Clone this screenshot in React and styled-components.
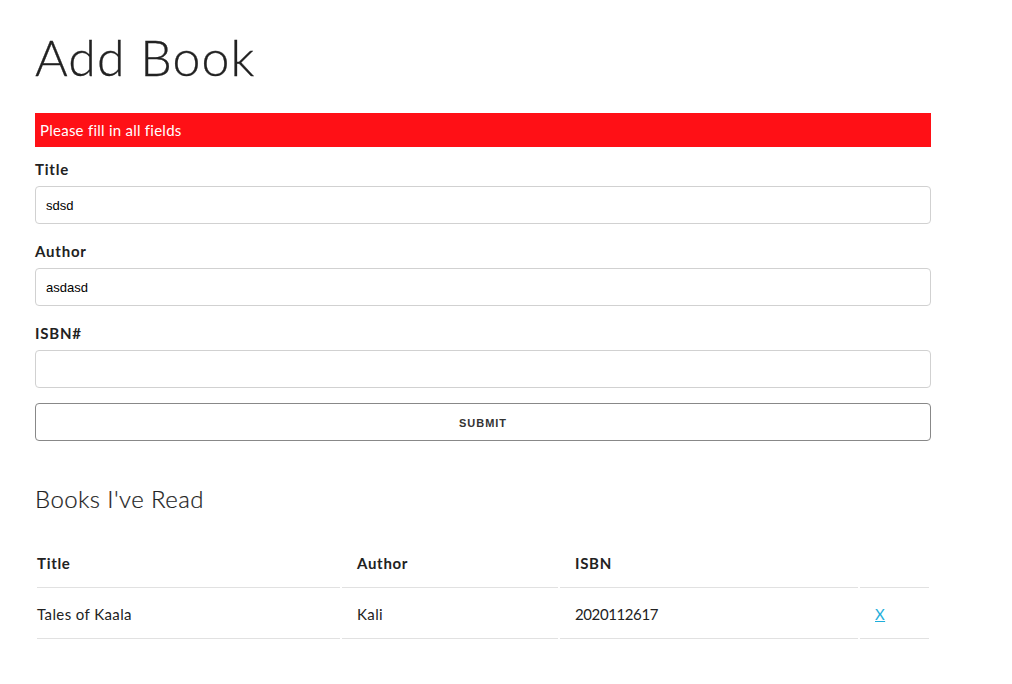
import React from "react";
import styled, { createGlobalStyle } from "styled-components";

const Global = createGlobalStyle`
  *, *::before, *::after { box-sizing: border-box; }
  html, body { margin: 0; padding: 0; background: #fff; }
  body {
    font-family: Lato, "Open Sans", sans-serif;
    font-size: 15px;
    line-height: 1.6;
    color: #222;
    letter-spacing: 0.35px;
  }
`;

const Page = styled.div`
  width: 896px;
  margin-left: 35px;
  padding-top: 27px;
`;

const H1 = styled.h1`
  margin: 0 0 26px;
  font-size: 50px;
  line-height: 1.2;
  font-weight: 300;
  letter-spacing: 1.1px;
  -webkit-text-stroke: 0.3px #222;
`;

const Alert = styled.div`
  background: #ff1016;
  color: #fff;
  padding: 5px;
  line-height: 24px;
  margin-bottom: 10px;
  letter-spacing: 0.25px;
`;

const Form = styled.form`
  display: flex;
  flex-direction: column;
`;

const Label = styled.label`
  display: block;
  font-weight: 700;
  line-height: 24px;
  margin-bottom: 5px;
  letter-spacing: 0.8px;
`;

const Input = styled.input`
  display: block;
  width: 100%;
  height: 38px;
  padding: 6px 10px;
  border: 1px solid #d1d1d1;
  border-radius: 4px;
  margin: 0 0 15px;
  font-family: "Liberation Sans", Arial, sans-serif;
  font-size: 13px;
  color: #000;
  background: #fff;
  outline: none;
`;

const Button = styled.button`
  display: block;
  width: 100%;
  height: 38px;
  padding: 0 30px;
  border: 1px solid #888;
  border-radius: 4px;
  background: transparent;
  color: #333;
  font-family: "Liberation Sans", Arial, sans-serif;
  font-size: 11px;
  font-weight: 700;
  letter-spacing: 1px;
  text-transform: uppercase;
  line-height: 38px;
  cursor: pointer;
`;

const H5 = styled.h5`
  margin: 40px 0 20px;
  font-size: 24px;
  line-height: 1.5;
  font-weight: 300;
  letter-spacing: 0.4px;
  -webkit-text-stroke: 0.2px #222;
`;

const Table = styled.table`
  width: 100%;
  table-layout: fixed;
  border-spacing: 2px;
  margin: 0;
`;

const Th = styled.th`
  text-align: left;
  font-weight: 700;
  padding: 12px 15px;
  padding-left: ${(p) => (p.$first ? "0" : "15px")};
  line-height: 24px;
  border-bottom: 1px solid #e1e1e1;
  letter-spacing: 0.7px;
`;

const Td = styled.td`
  text-align: left;
  padding: 12px 15px;
  padding-left: ${(p) => (p.$first ? "0" : "15px")};
  line-height: 24px;
  border-bottom: 1px solid #e1e1e1;
  letter-spacing: ${(p) => (p.$numeric ? "-0.4px" : "0.4px")};
`;

const DeleteLink = styled.a`
  color: #1eaedb;
  text-decoration: underline;
  cursor: pointer;
`;

export default function App() {
  return (
    <>
      <Global />
      <Page>
        <H1>Add Book</H1>
        <Alert>Please fill in all fields</Alert>
        <Form onSubmit={(e) => e.preventDefault()}>
          <Label>Title</Label>
          <Input defaultValue="sdsd" />
          <Label>Author</Label>
          <Input defaultValue="asdasd" />
          <Label>ISBN#</Label>
          <Input defaultValue="" />
          <Button type="submit">Submit</Button>
        </Form>
        <H5>Books I've Read</H5>
        <Table>
          <colgroup>
            <col style={{ width: 303 }} />
            <col style={{ width: 216 }} />
            <col style={{ width: 298 }} />
            <col style={{ width: 69 }} />
          </colgroup>
          <thead>
            <tr>
              <Th $first>Title</Th>
              <Th>Author</Th>
              <Th>ISBN</Th>
              <Th></Th>
            </tr>
          </thead>
          <tbody>
            <tr>
              <Td $first>Tales of Kaala</Td>
              <Td>Kali</Td>
              <Td $numeric>2020112617</Td>
              <Td>
                <DeleteLink href="#">X</DeleteLink>
              </Td>
            </tr>
          </tbody>
        </Table>
      </Page>
    </>
  );
}
